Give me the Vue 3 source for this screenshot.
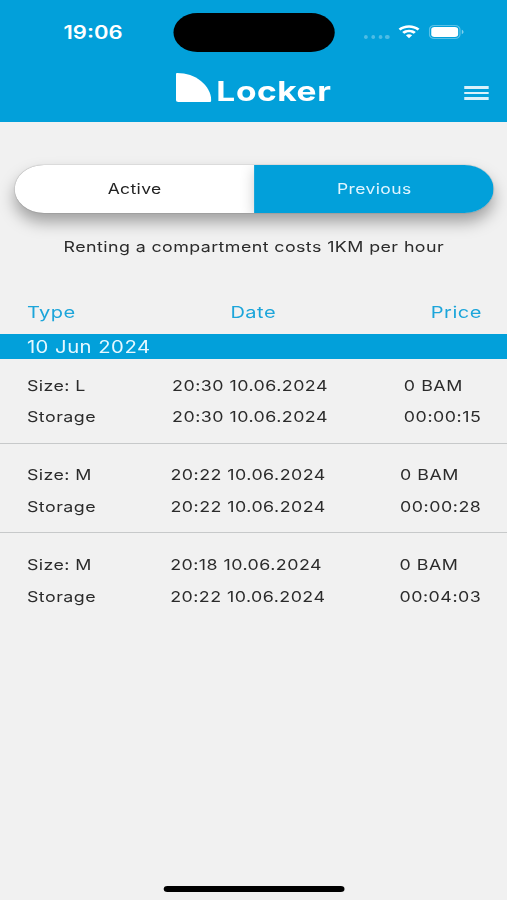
<script setup>
import { ref } from 'vue'

const selected = ref('Previous')
const tabs = ['Active', 'Previous']

const rentals = [
  { size: 'L', start: '20:30 10.06.2024', end: '20:30 10.06.2024', price: '0 BAM', duration: '00:00:15' },
  { size: 'M', start: '20:22 10.06.2024', end: '20:22 10.06.2024', price: '0 BAM', duration: '00:00:28' },
  { size: 'M', start: '20:18 10.06.2024', end: '20:22 10.06.2024', price: '0 BAM', duration: '00:04:03' },
]
</script>

<template>
  <div class="screen">
    <header class="top">
      <div class="status">
        <span class="time">19:06</span>
        <span class="island"></span>
        <div class="indicators">
          <span class="dots"><i v-for="n in 4" :key="n"></i></span>
          <svg class="wifi" viewBox="0 0 18 14" fill="#fff">
            <path d="M9 0.2C5.6 0.2 2.5 1.5 0.2 3.7L1.9 5.5C3.8 3.8 6.3 2.7 9 2.7s5.2 1.1 7.1 2.8l1.7-1.8C15.5 1.5 12.4 0.2 9 0.2z" />
            <path d="M9 4.8c-2.2 0-4.2 0.9-5.7 2.3L5 8.9c1.1-1 2.5-1.6 4-1.6s2.9 0.6 4 1.6l1.7-1.8C13.2 5.7 11.2 4.8 9 4.8z" />
            <path d="M9 9.3c-1 0-1.9 0.4-2.6 1L9 13.5l2.6-3.2C10.9 9.7 10 9.3 9 9.3z" />
          </svg>
          <svg class="battery" viewBox="0 0 29 14">
            <rect x="0.5" y="0.5" width="25" height="13" rx="4" fill="none" stroke="#fff" stroke-opacity="0.35" />
            <rect x="2" y="2" width="22" height="10" rx="2.7" fill="#fff" />
            <path d="M27 4.8v4.4c0.9-0.4 1.4-1.2 1.4-2.2s-0.5-1.8-1.4-2.2z" fill="#fff" fill-opacity="0.5" />
          </svg>
        </div>
      </div>
      <div class="bar">
        <div class="brand">
          <svg class="mark" viewBox="0 0 29 29"><path d="M1 0C16 0 28.5 12 29 27.5Q29 29 27.5 29H2Q0 29 0 27V1Q0 0 1 0z" fill="#fff" /></svg>
          <span class="name">Locker</span>
        </div>
        <button class="menu" aria-label="Menu"><i></i><i></i><i></i></button>
      </div>
    </header>

    <main>
      <div class="toggle">
        <button v-for="tab in tabs" :key="tab" :class="{ on: selected === tab }" @click="selected = tab">{{ tab }}</button>
      </div>
      <p class="note">Renting a compartment costs 1KM per hour</p>

      <div class="heads"><span>Type</span><span>Date</span><span>Price</span></div>
      <div class="day">10 Jun 2024</div>
      <section v-for="(r, i) in rentals" :key="i" class="rental">
        <div><p>Size: {{ r.size }}</p><p>Storage</p></div>
        <div><p>{{ r.start }}</p><p>{{ r.end }}</p></div>
        <div><p>{{ r.price }}</p><p>{{ r.duration }}</p></div>
      </section>
    </main>

    <footer><span class="home"></span></footer>
  </div>
</template>

<style>
body { margin: 0; background: #f1f1f1; overflow: hidden; }
</style>

<style scoped>
.screen {
  width: 415px;
  height: 900px;
  display: flex;
  flex-direction: column;
  transform: scaleX(1.22169);
  transform-origin: 0 0;
  background: #f1f1f1;
  color: #2b2b2b;
  font-family: Inter, "Liberation Sans", sans-serif;
  font-size: 14.6px;
  letter-spacing: 0.4px;
}
p { margin: 0; }
button { border: 0; padding: 0; font: inherit; letter-spacing: inherit; background: none; }
.top { height: 122px; background: #02a0da; color: #fff; }
.status {
  height: 64px;
  display: grid;
  grid-template-columns: 142px 132px 1fr;
  align-items: center;
}
.time { padding-left: 52px; font-size: 18px; font-weight: 600; letter-spacing: 0; }
.island { height: 39px; border-radius: 20px; background: #000; }
.indicators { display: flex; align-items: center; padding-left: 24px; }
.dots { display: flex; gap: 2.4px; padding-top: 9px; }
.dots i { width: 3.4px; height: 4px; border-radius: 50%; background: #fff; opacity: 0.3; }
.wifi { width: 17.6px; height: 14px; margin-left: 7.6px; }
.battery { width: 29px; height: 14px; margin-left: 7.4px; }
.bar {
  height: 58px;
  display: grid;
  grid-template-columns: 1fr auto 1fr;
  padding: 0 15.5px;
}
.brand { grid-column: 2; display: flex; align-items: flex-start; gap: 4.4px; padding-top: 9px; }
.mark { width: 29px; height: 29px; }
.name { font-size: 27.4px; line-height: 36px; font-weight: 700; letter-spacing: 0.5px; }
.menu {
  justify-self: end;
  align-self: start;
  width: 19.6px;
  margin-top: 22px;
  display: flex;
  flex-direction: column;
  gap: 3px;
}
.menu i { height: 2.5px; background: #fff; opacity: 0.85; }
main { flex: 1; }
.toggle {
  display: flex;
  height: 48px;
  margin: 43px 10.6px 0 12.2px;
  border-radius: 24px;
  overflow: hidden;
  background: #fff;
  box-shadow: 0 9px 14px rgba(0, 0, 0, 0.34), 0 0 1px rgba(0, 0, 0, 0.5);
}
.toggle button { flex: 1; padding-bottom: 1px; color: #222; font-size: 14.3px; letter-spacing: 0.33px; }
.toggle .on { background: #02a0da; color: #dff5ff; box-shadow: 0 4px 12px rgba(0, 0, 0, 0.2); }
.note { margin-top: 22px; padding-left: 0.5px; line-height: 24px; letter-spacing: 0.34px; text-align: center; }
.heads {
  display: flex;
  justify-content: space-between;
  margin-top: 40px;
  padding: 0 20.6px 0 22px;
  font-size: 16.4px;
  letter-spacing: 0.4px;
  line-height: 26px;
  color: #1ca5da;
}
.day {
  height: 24px;
  margin-top: 9px;
  padding: 1px 0 0 22px;
  background: #02a0da;
  color: #e6f8ff;
  font-size: 16.6px;
  letter-spacing: 0.4px;
  line-height: 24px;
}
.rental {
  display: flex;
  justify-content: space-between;
  padding: 16.5px 21px 8.6px 22px;
  line-height: 31.8px;
}
.rental p:first-child { letter-spacing: 0.33px; }
.rental > :nth-child(2) p { letter-spacing: 0.38px; }
.rental > :last-child p { letter-spacing: 0.42px; }
.day + .rental { padding-top: 11.5px; }
.rental:not(:last-child) { border-bottom: 1px solid #c7c9ca; }
footer { display: flex; justify-content: center; padding-bottom: 8px; }
.home { width: 148px; height: 6px; border-radius: 3px; background: #000; }
</style>
